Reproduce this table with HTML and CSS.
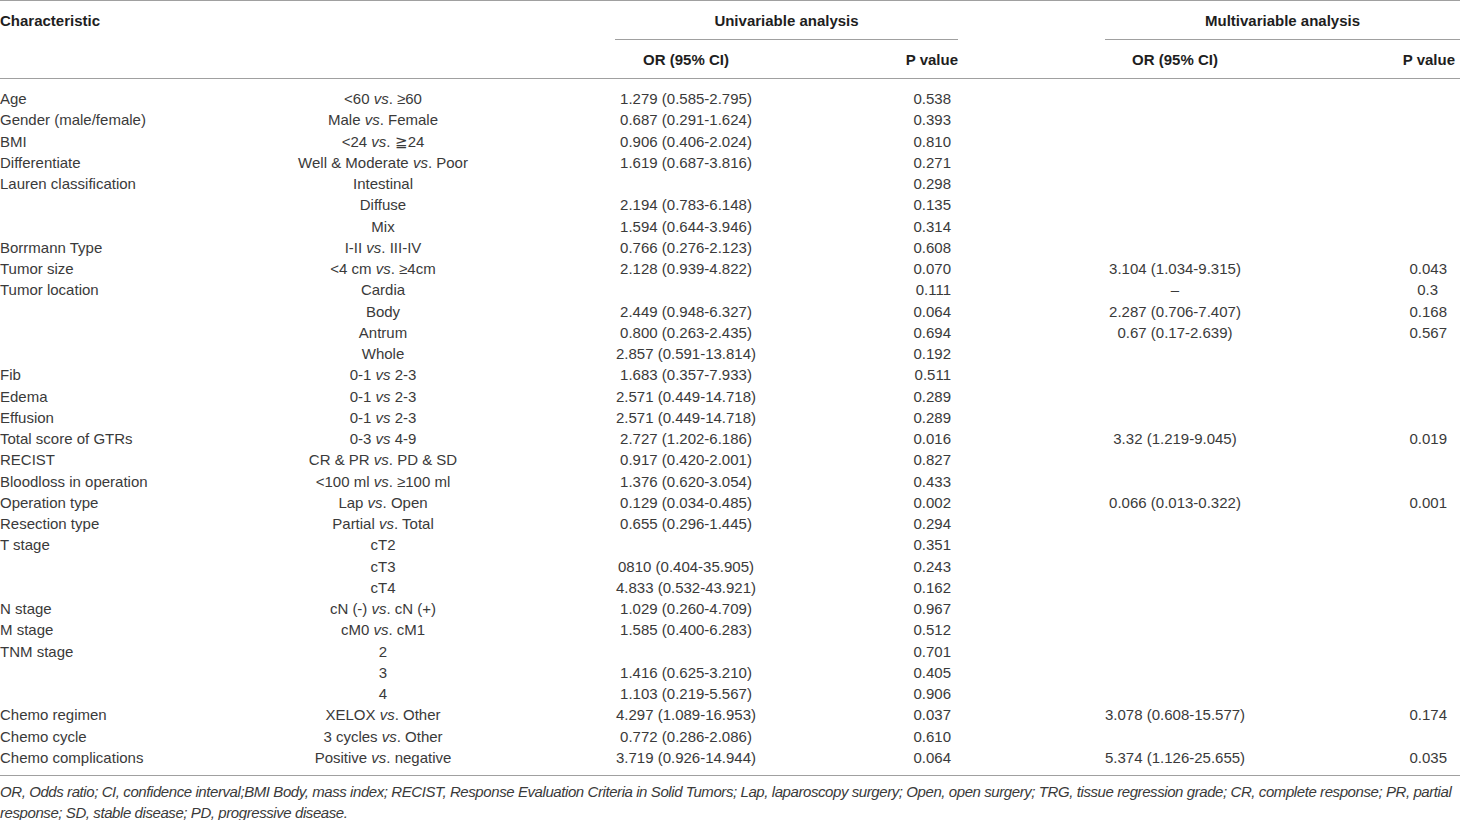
FILE: index.html
```html
<!DOCTYPE html>
<html lang="en">
<head>
    <meta charset="UTF-8">
    <title>Univariable and multivariable analysis</title>
    <link rel="stylesheet" href="styles.css">
</head>
<body>
    <table class="results">
        <colgroup>
            <col class="c-char">
            <col class="c-cat">
            <col class="c-gap1">
            <col class="c-or1">
            <col class="c-p1">
            <col class="c-gap2">
            <col class="c-or2">
            <col class="c-p2">
        </colgroup>
        <thead>
            <tr class="head-top">
                <th class="char">Characteristic</th>
                <th></th>
                <th></th>
                <th class="group" colspan="2">Univariable analysis</th>
                <th></th>
                <th class="group" colspan="2">Multivariable analysis</th>
            </tr>
            <tr class="head-sub">
                <th></th>
                <th></th>
                <th></th>
                <th class="or">OR (95% CI)</th>
                <th class="p p1">P value</th>
                <th></th>
                <th class="or">OR (95% CI)</th>
                <th class="p p2">P value</th>
            </tr>
        </thead>
        <tbody>
            <tr><td>Age</td><td class="cat">&lt;60 <i>vs</i>. ≥60</td><td></td><td class="or">1.279 (0.585-2.795)</td><td class="p p1">0.538</td><td></td><td class="or"></td><td class="p p2"></td></tr>
            <tr><td>Gender (male/female)</td><td class="cat">Male <i>vs</i>. Female</td><td></td><td class="or">0.687 (0.291-1.624)</td><td class="p p1">0.393</td><td></td><td class="or"></td><td class="p p2"></td></tr>
            <tr><td>BMI</td><td class="cat">&lt;24 <i>vs</i>. ≧24</td><td></td><td class="or">0.906 (0.406-2.024)</td><td class="p p1">0.810</td><td></td><td class="or"></td><td class="p p2"></td></tr>
            <tr><td>Differentiate</td><td class="cat">Well &amp; Moderate <i>vs</i>. Poor</td><td></td><td class="or">1.619 (0.687-3.816)</td><td class="p p1">0.271</td><td></td><td class="or"></td><td class="p p2"></td></tr>
            <tr><td>Lauren classification</td><td class="cat">Intestinal</td><td></td><td class="or"></td><td class="p p1">0.298</td><td></td><td class="or"></td><td class="p p2"></td></tr>
            <tr><td></td><td class="cat">Diffuse</td><td></td><td class="or">2.194 (0.783-6.148)</td><td class="p p1">0.135</td><td></td><td class="or"></td><td class="p p2"></td></tr>
            <tr><td></td><td class="cat">Mix</td><td></td><td class="or">1.594 (0.644-3.946)</td><td class="p p1">0.314</td><td></td><td class="or"></td><td class="p p2"></td></tr>
            <tr><td>Borrmann Type</td><td class="cat">I-II <i>vs</i>. III-IV</td><td></td><td class="or">0.766 (0.276-2.123)</td><td class="p p1">0.608</td><td></td><td class="or"></td><td class="p p2"></td></tr>
            <tr><td>Tumor size</td><td class="cat">&lt;4 cm <i>vs</i>. ≥4cm</td><td></td><td class="or">2.128 (0.939-4.822)</td><td class="p p1">0.070</td><td></td><td class="or">3.104 (1.034-9.315)</td><td class="p p2">0.043</td></tr>
            <tr><td>Tumor location</td><td class="cat">Cardia</td><td></td><td class="or"></td><td class="p p1">0.111</td><td></td><td class="or">–</td><td class="p p2 short">0.3</td></tr>
            <tr><td></td><td class="cat">Body</td><td></td><td class="or">2.449 (0.948-6.327)</td><td class="p p1">0.064</td><td></td><td class="or">2.287 (0.706-7.407)</td><td class="p p2">0.168</td></tr>
            <tr><td></td><td class="cat">Antrum</td><td></td><td class="or">0.800 (0.263-2.435)</td><td class="p p1">0.694</td><td></td><td class="or">0.67 (0.17-2.639)</td><td class="p p2">0.567</td></tr>
            <tr><td></td><td class="cat">Whole</td><td></td><td class="or">2.857 (0.591-13.814)</td><td class="p p1">0.192</td><td></td><td class="or"></td><td class="p p2"></td></tr>
            <tr><td>Fib</td><td class="cat">0-1 <i>vs</i> 2-3</td><td></td><td class="or">1.683 (0.357-7.933)</td><td class="p p1">0.511</td><td></td><td class="or"></td><td class="p p2"></td></tr>
            <tr><td>Edema</td><td class="cat">0-1 <i>vs</i> 2-3</td><td></td><td class="or">2.571 (0.449-14.718)</td><td class="p p1">0.289</td><td></td><td class="or"></td><td class="p p2"></td></tr>
            <tr><td>Effusion</td><td class="cat">0-1 <i>vs</i> 2-3</td><td></td><td class="or">2.571 (0.449-14.718)</td><td class="p p1">0.289</td><td></td><td class="or"></td><td class="p p2"></td></tr>
            <tr><td>Total score of GTRs</td><td class="cat">0-3 <i>vs</i> 4-9</td><td></td><td class="or">2.727 (1.202-6.186)</td><td class="p p1">0.016</td><td></td><td class="or">3.32 (1.219-9.045)</td><td class="p p2">0.019</td></tr>
            <tr><td>RECIST</td><td class="cat">CR &amp; PR <i>vs</i>. PD &amp; SD</td><td></td><td class="or">0.917 (0.420-2.001)</td><td class="p p1">0.827</td><td></td><td class="or"></td><td class="p p2"></td></tr>
            <tr><td>Bloodloss in operation</td><td class="cat">&lt;100 ml <i>vs</i>. ≥100 ml</td><td></td><td class="or">1.376 (0.620-3.054)</td><td class="p p1">0.433</td><td></td><td class="or"></td><td class="p p2"></td></tr>
            <tr><td>Operation type</td><td class="cat">Lap <i>vs</i>. Open</td><td></td><td class="or">0.129 (0.034-0.485)</td><td class="p p1">0.002</td><td></td><td class="or">0.066 (0.013-0.322)</td><td class="p p2">0.001</td></tr>
            <tr><td>Resection type</td><td class="cat">Partial <i>vs</i>. Total</td><td></td><td class="or">0.655 (0.296-1.445)</td><td class="p p1">0.294</td><td></td><td class="or"></td><td class="p p2"></td></tr>
            <tr><td>T stage</td><td class="cat">cT2</td><td></td><td class="or"></td><td class="p p1">0.351</td><td></td><td class="or"></td><td class="p p2"></td></tr>
            <tr><td></td><td class="cat">cT3</td><td></td><td class="or">0810 (0.404-35.905)</td><td class="p p1">0.243</td><td></td><td class="or"></td><td class="p p2"></td></tr>
            <tr><td></td><td class="cat">cT4</td><td></td><td class="or">4.833 (0.532-43.921)</td><td class="p p1">0.162</td><td></td><td class="or"></td><td class="p p2"></td></tr>
            <tr><td>N stage</td><td class="cat">cN (-) <i>vs</i>. cN (+)</td><td></td><td class="or">1.029 (0.260-4.709)</td><td class="p p1">0.967</td><td></td><td class="or"></td><td class="p p2"></td></tr>
            <tr><td>M stage</td><td class="cat">cM0 <i>vs</i>. cM1</td><td></td><td class="or">1.585 (0.400-6.283)</td><td class="p p1">0.512</td><td></td><td class="or"></td><td class="p p2"></td></tr>
            <tr><td>TNM stage</td><td class="cat">2</td><td></td><td class="or"></td><td class="p p1">0.701</td><td></td><td class="or"></td><td class="p p2"></td></tr>
            <tr><td></td><td class="cat">3</td><td></td><td class="or">1.416 (0.625-3.210)</td><td class="p p1">0.405</td><td></td><td class="or"></td><td class="p p2"></td></tr>
            <tr><td></td><td class="cat">4</td><td></td><td class="or">1.103 (0.219-5.567)</td><td class="p p1">0.906</td><td></td><td class="or"></td><td class="p p2"></td></tr>
            <tr><td>Chemo regimen</td><td class="cat">XELOX <i>vs</i>. Other</td><td></td><td class="or">4.297 (1.089-16.953)</td><td class="p p1">0.037</td><td></td><td class="or">3.078 (0.608-15.577)</td><td class="p p2">0.174</td></tr>
            <tr><td>Chemo cycle</td><td class="cat">3 cycles <i>vs</i>. Other</td><td></td><td class="or">0.772 (0.286-2.086)</td><td class="p p1">0.610</td><td></td><td class="or"></td><td class="p p2"></td></tr>
            <tr><td>Chemo complications</td><td class="cat">Positive <i>vs</i>. negative</td><td></td><td class="or">3.719 (0.926-14.944)</td><td class="p p1">0.064</td><td></td><td class="or">5.374 (1.126-25.655)</td><td class="p p2">0.035</td></tr>
        </tbody>
    </table>
    <p class="note">OR, Odds ratio; CI, confidence interval;BMI Body, mass index; RECIST, Response Evaluation Criteria in Solid Tumors; Lap, laparoscopy surgery; Open, open surgery; TRG, tissue regression grade; CR, complete response; PR, partial response; SD, stable disease; PD, progressive disease.</p>
</body>
</html>
```

FILE: styles.css
```css
body {
    margin: 0;
    background-color: #fff;
    color: #3a3a3a;
    font-family: 'Liberation Sans', Arial, sans-serif;
    font-size: 15px;
}
.results {
    width: 1460px;
    border-collapse: collapse;
    table-layout: fixed;
    border-top: 1px solid #a0a0a0;
}
.c-char { width: 283px; }
.c-cat { width: 200px; }
.c-gap1 { width: 132px; }
.c-or1 { width: 142px; }
.c-p1 { width: 201px; }
.c-gap2 { width: 147px; }
.c-or2 { width: 140px; }
.c-p2 { width: 215px; }

th {
    padding: 0;
    font-weight: bold;
    color: #1e1e1e;
    white-space: nowrap;
}
.head-top th {
    height: 38px;
    vertical-align: middle;
}
.head-sub th {
    height: 38px;
    vertical-align: middle;
    border-bottom: 1px solid #a0a0a0;
}
th.char {
    text-align: left;
}
th.group {
    text-align: center;
    border-bottom: 1px solid #a0a0a0;
}
th.or {
    text-align: center;
}
th.p1 {
    text-align: right;
    padding-right: 0;
}
th.p2 {
    text-align: right;
    padding-right: 5px;
}

td {
    padding: 0;
    height: 21.25px;
    line-height: 21.25px;
    white-space: nowrap;
}
tbody tr:first-child td {
    padding-top: 9px;
}
tbody tr:last-child td {
    padding-bottom: 7px;
    border-bottom: 1px solid #a0a0a0;
}
td.cat,
td.or {
    text-align: center;
}
td.p1 {
    text-align: right;
    padding-right: 7px;
}
td.p2 {
    text-align: right;
    padding-right: 13px;
}
td.p2.short {
    padding-right: 22px;
}

.note {
    margin: 0;
    padding-top: 5px;
    font-style: italic;
    line-height: 21px;
    letter-spacing: -0.42px;
}
```
